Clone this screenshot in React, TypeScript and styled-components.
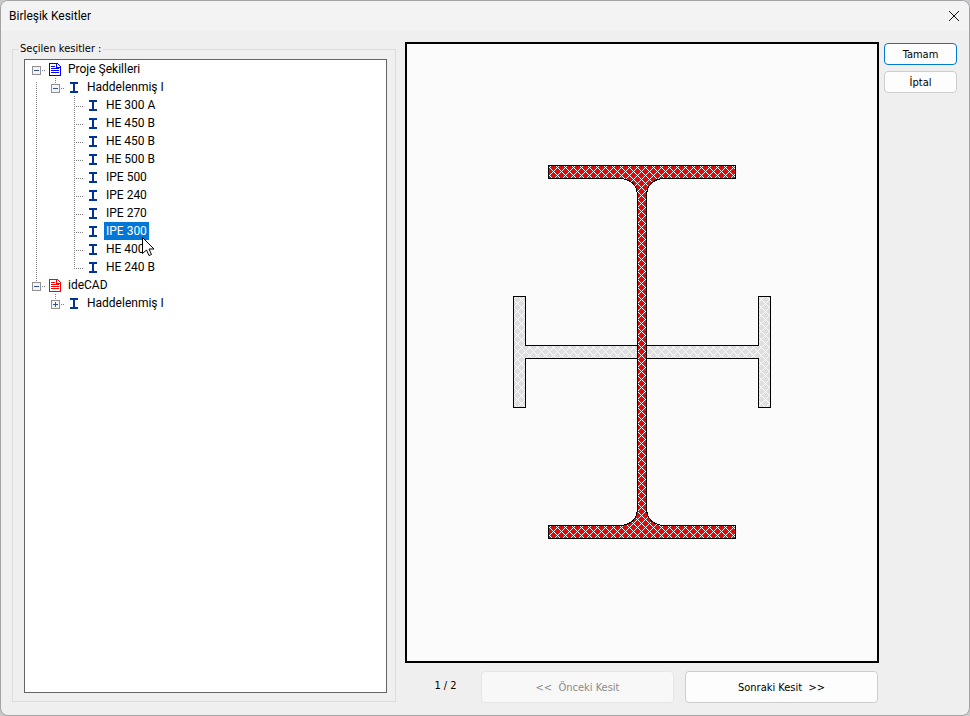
import React, { useState } from 'react';
import styled, { createGlobalStyle } from 'styled-components';

const GlobalStyle = createGlobalStyle`
  * { box-sizing: border-box; }
  body { margin: 0; background: #c9c9cb; color: #000; }
  button { font: inherit; color: inherit; }
`;

const uiFont = `Roboto, "Open Sans", sans-serif`;
const smallFont = `"DejaVu Sans Condensed", "DejaVu Sans", sans-serif`;

const Dialog = styled.main`
  display: flex;
  flex-direction: column;
  height: 100vh;
  min-height: 360px;
  border: 1px solid #a3a3a3;
  border-radius: 8px;
  background: #efefef;
  overflow: hidden;
  font: 12px/18px ${uiFont};
`;

const TitleBar = styled.header`
  display: flex;
  align-items: center;
  justify-content: space-between;
  height: 30px;
  flex: none;
  padding: 0 8px;
  background: #f3f3f3;
`;

const Title = styled.h1`
  margin: 0;
  font: inherit;
`;

const CloseButton = styled.button`
  display: grid;
  place-items: center;
  width: 14px;
  height: 20px;
  padding: 0;
  border: 0;
  background: none;
`;

const Content = styled.div`
  flex: 1;
  min-height: 0;
  display: grid;
  grid-template-columns: minmax(0, 384fr) minmax(0, 483fr) 78px;
  padding: 11px 12px 12px 11px;
`;

const Group = styled.fieldset`
  display: flex;
  flex-direction: column;
  min-width: 0;
  margin: 0 0 1px;
  padding: 3px 8px 8px 11px;
  border: 1px solid #dcdcdc;
`;

const GroupLabel = styled.legend`
  margin-left: -6px;
  padding: 0 2px;
  font: 11px/14px ${smallFont};
`;

const Tree = styled.ul`
  flex: 1;
  min-height: 0;
  margin: 0;
  padding: 0 0 0 2px;
  overflow: auto;
  list-style: none;
  border: 1px solid #646464;
  background: #fff;
`;

const Row = styled.li`
  position: relative;
  display: flex;
  height: 18px;
`;

const Cell = styled.span`
  flex: none;
  width: 19px;
  height: 18px;
  svg { display: block; }
`;

const Toggle = styled.button`
  display: block;
  padding: 0;
  border: 0;
  background: none;
`;

const Label = styled.button<{ $selected?: boolean }>`
  margin-left: 1px;
  padding: 0 2px;
  border: 0;
  line-height: 18px;
  white-space: nowrap;
  background: ${p => (p.$selected ? '#0078d7' : 'transparent')};
  color: ${p => (p.$selected ? '#fff' : '#000')};
`;

const Pointer = styled.svg`
  position: absolute;
  left: 115px;
  top: 15px;
  z-index: 1;
  pointer-events: none;
`;

const PreviewColumn = styled.section`
  display: flex;
  flex-direction: column;
  min-height: 0;
  padding-left: 9px;
`;

const Preview = styled.div`
  display: flex;
  flex: 1;
  min-height: 0;
  border: 2px solid #000;
  background: #fbfbfb;
  svg { flex: 1; min-width: 0; height: 100%; }
`;

const Pager = styled.nav`
  display: grid;
  grid-template-columns: 65px 1fr 1fr;
  column-gap: 11px;
  align-items: center;
  padding: 8px 1px 0 0;
  font: 11px/14px ${smallFont};
`;

const PageCount = styled.span`
  padding: 0 0 2px 16px;
  text-align: center;
`;

const PushButton = styled.button<{ $primary?: boolean; $tall?: boolean }>`
  height: ${p => (p.$tall ? '32px' : '22px')};
  padding: 2px 0 0;
  border: 1px solid ${p => (p.$primary ? '#0078d4' : '#cdcdcd')};
  border-radius: 4px;
  background: #fdfdfd;
  font: 11px/14px ${smallFont};
  white-space: pre;
  &:disabled {
    border-color: #e6e6e6;
    background: #f8f8f8;
    color: #8b8b8b;
  }
`;

const Actions = styled.aside`
  display: flex;
  flex-direction: column;
  gap: 6px;
  padding: 1px 0 0 5px;
`;

type CellKind = 'line' | 'lineStart' | 'tee' | 'corner' | 'blank';

function Guide({ kind }: { kind: CellKind }) {
  const vertical: Record<CellKind, string> = {
    line: 'M9.5 0V18',
    lineStart: 'M9.5 4V18',
    tee: 'M9.5 0V18',
    corner: 'M9.5 0V11',
    blank: '',
  };
  return (
    <Cell aria-hidden>
      <svg width="19" height="18" fill="none" stroke="#808080" strokeDasharray="1 1" shapeRendering="crispEdges">
        {kind !== 'blank' && <path d={vertical[kind]} />}
        {(kind === 'tee' || kind === 'corner') && <path d="M9 10.5H19" />}
      </svg>
    </Cell>
  );
}

function Expander({ open, above, name }: { open: boolean; above: boolean; name: string }) {
  return (
    <Cell>
      <Toggle aria-label={name} aria-expanded={open}>
        <svg width="19" height="18" fill="none" shapeRendering="crispEdges">
          {above && <path d="M9.5 0V6" stroke="#808080" strokeDasharray="1 1" />}
          <path d="M15 10.5H19" stroke="#808080" strokeDasharray="1 1" />
          <rect x="5.5" y="6.5" width="8" height="8" fill="#f4f4f4" stroke="#919191" />
          <path d={open ? 'M7 10.5H12' : 'M7 10.5H12M9.5 8V13'} stroke="#3050a0" />
        </svg>
      </Toggle>
    </Cell>
  );
}

function PageIcon({ color }: { color: string }) {
  return (
    <Cell aria-hidden>
      <svg width="19" height="18" fill={color} shapeRendering="crispEdges">
        <path d="M3 3H12V4H13V5H14V6H15V16H3Z" />
        <path fill="#fff" d="M4 4H10V8H14V15H4Z M11 4H12V5H13V6H14V7H11Z" />
        <path d="M5 6H9V7H5Z M5 8H13V9H5Z M5 10H13V11H5Z M5 12H13V13H5Z" />
      </svg>
    </Cell>
  );
}

function BeamIcon() {
  return (
    <Cell aria-hidden>
      <svg width="19" height="18" fill="#003399" shapeRendering="crispEdges">
        <path d="M5 4H13V6H10V13H13V15H5V13H8V6H5Z" />
      </svg>
    </Cell>
  );
}

type Item = { label: string; guides: CellKind[]; page?: string; open?: boolean; above?: boolean };

const profiles = ['HE 300 A', 'HE 450 B', 'HE 450 B', 'HE 500 B', 'IPE 500', 'IPE 240', 'IPE 270', 'IPE 300', 'HE 400', 'HE 240 B'];

const items: Item[] = [
  { label: 'Proje Şekilleri', guides: [], page: '#0000ff', open: true },
  { label: 'Haddelenmiş I', guides: ['lineStart'], open: true, above: true },
  ...profiles.map((label, i): Item => ({
    label,
    guides: ['line', 'blank', i === profiles.length - 1 ? 'corner' : 'tee'],
  })),
  { label: 'ideCAD', guides: [], page: '#ff0000', open: true, above: true },
  { label: 'Haddelenmiş I', guides: ['blank'], open: false, above: true },
];

const hatchPixels = Array.from({ length: 8 }, (_, i) => `M${i} ${i}h1v1h-1zM${i} ${(8 - i) % 8}h1v1h-1z`).join('');

function Hatch({ id, color }: { id: string; color: string }) {
  return (
    <pattern id={id} width="8" height="8" x="2" y="7" patternUnits="userSpaceOnUse">
      <rect width="8" height="8" fill={color} stroke="none" />
      <path d={hatchPixels} fill="#fff" stroke="none" />
    </pattern>
  );
}

function SectionDrawing() {
  return (
    <svg viewBox="0 0 470 617" role="img" aria-label="IPE 300">
      <defs>
        <Hatch id="hatchRed" color="#e20a0a" />
        <Hatch id="hatchGray" color="#dedee0" />
      </defs>
      <g stroke="#000" shapeRendering="crispEdges">
        <path
          fill="url(#hatchGray)"
          d="M106.5 252.5H118.5V301.5H351.5V252.5H363.5V363.5H351.5V314.5H118.5V363.5H106.5Z"
        />
        <path
          fill="url(#hatchRed)"
          d="M141.5 121.5H328.5V134.5H257.5Q239.5 135.5 239.5 152.5V463.5Q239.5 480.5 257.5 481.5H328.5V494.5H141.5V481.5H212.5Q230.5 480.5 230.5 463.5V152.5Q230.5 135.5 212.5 134.5H141.5Z"
        />
      </g>
    </svg>
  );
}

export default function App() {
  const [selected, setSelected] = useState(9);
  return (
    <>
      <GlobalStyle />
      <Dialog>
        <TitleBar>
          <Title>Birleşik Kesitler</Title>
          <CloseButton aria-label="Kapat">
            <svg width="10" height="10" fill="none" stroke="#111">
              <path d="M0 0L10 10M10 0L0 10" />
            </svg>
          </CloseButton>
        </TitleBar>
        <Content>
          <Group>
            <GroupLabel>Seçilen kesitler :</GroupLabel>
            <Tree>
              {items.map((item, i) => (
                <Row key={i}>
                  {item.guides.map((kind, n) => <Guide key={n} kind={kind} />)}
                  {item.open !== undefined && <Expander open={item.open} above={!!item.above} name={item.label} />}
                  {item.page ? <PageIcon color={item.page} /> : <BeamIcon />}
                  <Label $selected={i === selected} onClick={() => setSelected(i)}>{item.label}</Label>
                  {i === 9 && (
                    <Pointer width="13" height="20" fill="#fff" stroke="#000" aria-hidden>
                      <path d="M.5 .5V16.5L4.5 13L7 18.5L9.5 17.5L7 12H12Z" />
                    </Pointer>
                  )}
                </Row>
              ))}
            </Tree>
          </Group>
          <PreviewColumn>
            <Preview><SectionDrawing /></Preview>
            <Pager>
              <PageCount>1 / 2</PageCount>
              <PushButton $tall disabled>{'<<  Önceki Kesit'}</PushButton>
              <PushButton $tall>{'Sonraki Kesit  >>'}</PushButton>
            </Pager>
          </PreviewColumn>
          <Actions>
            <PushButton $primary>Tamam</PushButton>
            <PushButton>İptal</PushButton>
          </Actions>
        </Content>
      </Dialog>
    </>
  );
}
